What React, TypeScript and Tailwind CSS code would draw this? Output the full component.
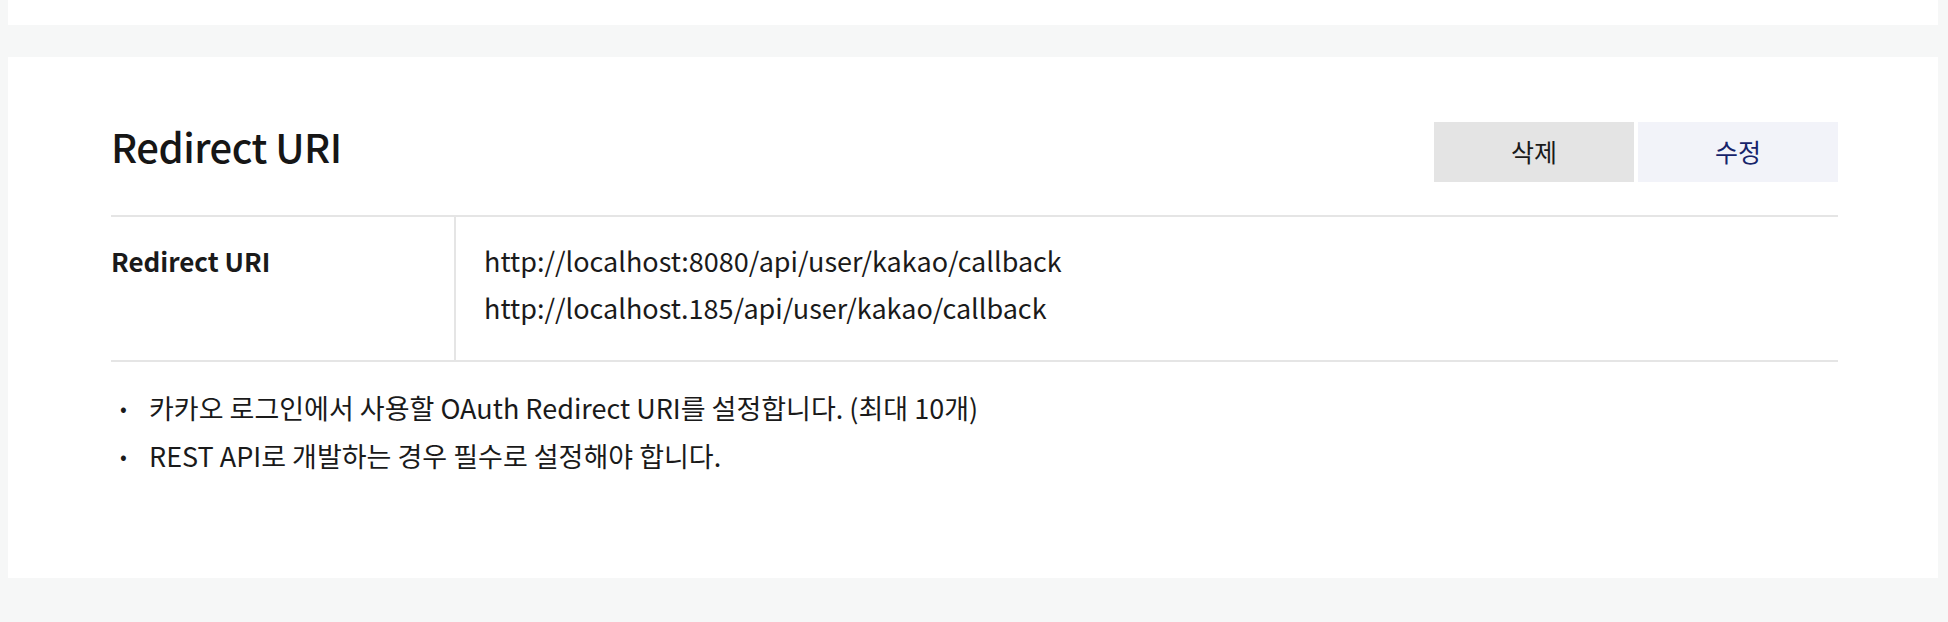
import React from "react";

export default function App() {
  const font = { fontFamily: '"Noto Sans CJK KR", "Noto Sans", sans-serif' };
  return (
    <div
      className="w-full h-[622px] bg-[#f6f7f7] pl-[8px] pr-[10px] text-[#1a1a1a] overflow-hidden"
      style={font}
    >
      <div className="h-[25px] bg-white" />
      <div className="mt-[32px] h-[521px] bg-white pl-[103px] pr-[100px] pt-[65px]">
        <div className="flex items-start justify-between h-[60px]">
          <h2 className="text-[40px] leading-[48px] font-medium tracking-[-0.5px] text-[#161616]">Redirect URI</h2>
          <div className="flex gap-[4px]">
            <button className="w-[200px] h-[60px] bg-[#e4e4e4] text-[25px] text-[#1a1a1a]">삭제</button>
            <button className="w-[200px] h-[60px] bg-[#f2f3f9] text-[25px] text-[#16236b]">수정</button>
          </div>
        </div>
        <div className="mt-[33px] border-t-2 border-b-2 border-[#e5e5e5] flex">
          <div className="w-[345px] shrink-0 border-r-2 border-[#e5e5e5] pt-[26px] text-[26px] leading-[36px] font-bold">
            Redirect URI
          </div>
          <div className="pl-[28px] pt-[26px] pb-[34px] text-[27px] leading-[36px] flex flex-col gap-[11px]">
            <div>http://localhost:8080/api/user/kakao/callback</div>
            <div>http://localhost.185/api/user/kakao/callback</div>
          </div>
        </div>
        <ul className="mt-[28px] flex flex-col gap-[12px] text-[27px] leading-[36px]">
          <li className="flex">
            <span className="w-[38px] shrink-0 pl-[9px] text-[20px]">•</span>
            <span>카카오 로그인에서 사용할 OAuth Redirect URI를 설정합니다. (최대 10개)</span>
          </li>
          <li className="flex">
            <span className="w-[38px] shrink-0 pl-[9px] text-[20px]">•</span>
            <span>REST API로 개발하는 경우 필수로 설정해야 합니다.</span>
          </li>
        </ul>
      </div>
    </div>
  );
}
